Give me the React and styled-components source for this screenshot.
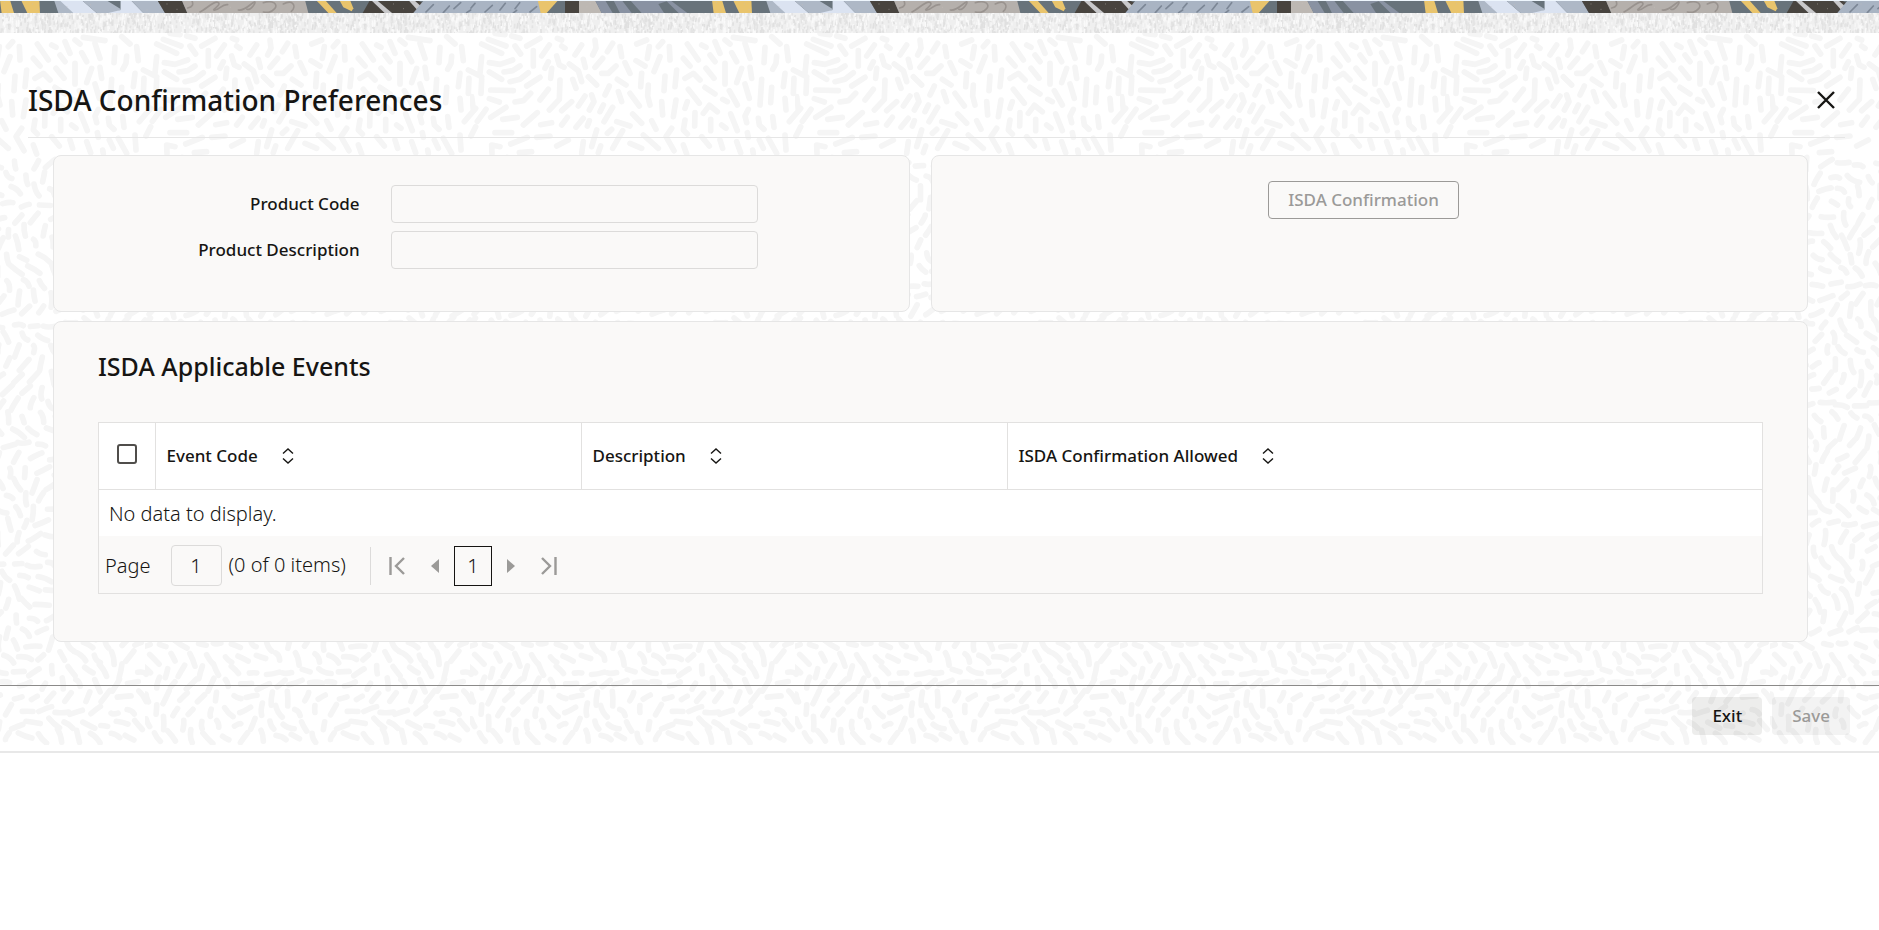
import React, { useState } from "react";
import styled, { createGlobalStyle } from "styled-components";

const svgUrl = (width, height, body) =>
  `url("data:image/svg+xml,${encodeURIComponent(
    `<svg xmlns="http://www.w3.org/2000/svg" width="${width}" height="${height}">${body}</svg>`
  )}")`;

const makeRandom = (seed) => () => {
  seed = (seed * 16807) % 2147483647;
  return seed / 2147483647;
};

// brush strokes of the page background, drawn at three times their size
const strokes = [
  "75,10 105,14", "125,18 150,25", "35,42 95,70", "55,28 108,48", "170,48 210,25",
  "135,48 152,72", "190,62 190,108", "215,78 238,45", "58,98 90,103 128,90",
  "102,126 128,122 150,108", "58,126 95,148", "120,155 150,148 175,128", "62,180 130,182",
  "35,80 30,130", "35,148 33,190", "58,206 88,216", "135,216 160,212 182,190",
  "62,262 108,232", "98,268 142,262", "22,274 48,238", "5,200 10,238", "160,285 202,248",
  "170,168 210,142", "210,210 235,178", "75,308 125,308", "122,342 172,322",
  "200,322 240,318", "212,284 245,278", "260,348 295,330", "66,370 65,345 90,350",
  "148,368 185,365", "275,48 285,55", "262,25 275,30", "315,75 335,45", "225,115 235,95",
  "245,115 242,145", "260,78 268,105 282,112", "340,88 346,112", "375,30 378,55 368,75",
  "298,102 325,122 335,155", "308,148 318,175", "375,112 398,85", "395,130 415,130 438,108",
  "412,65 428,40", "450,50 455,80", "355,140 380,165", "270,150 268,208 238,240",
  "325,228 345,198", "275,242 305,215", "365,195 372,215 358,240", "405,195 418,168",
  "390,245 400,225", "402,275 428,232", "442,148 468,165", "445,185 455,215",
  "480,190 508,228", "275,285 292,262", "318,292 340,265", "352,288 358,272",
  "440,275 480,288", "412,310 425,298", "365,350 380,300", "428,355 458,302",
  "335,370 340,335", "392,348 385,368", "480,340 515,355", "488,252 515,280",
  "520,315 565,355", "545,272 558,298", "535,165 533,198 540,225", "515,130 512,170",
  "500,42 530,30", "538,50 532,85", "565,50 578,35", "570,80 552,125", "598,50 600,90",
  "498,92 525,108", "465,98 480,130", "585,138 582,182", "620,120 615,170",
  "575,215 578,255", "618,210 610,260", "652,215 645,235", "675,248 674,288",
  "645,270 640,300 652,312", "605,295 588,320 612,362", "640,345 650,372",
  "652,42 685,90", "640,85 660,108", "695,45 708,52", "645,145 670,130 690,150",
  "720,75 735,95", "735,35 750,70", "765,30 780,42", "708,115 732,145", "765,100 765,162",
  "655,178 688,220", "705,172 735,192", "700,250 718,226 742,245", "722,268 722,302",
  "758,208 772,215", "755,285 768,295", "695,320 718,348", "750,330 758,355",
  "785,68 800,95", "815,115 800,158", "778,182 802,225", "782,252 802,302",
  "825,40 840,85", "790,22 855,32", "840,112 845,145", "825,162 838,205",
  "835,238 825,258 830,278", "832,308 835,322", "800,335 812,368", "848,360 850,370",
  "885,52 882,98", "920,78 918,100 908,118", "875,148 870,225", "905,172 902,218",
  "865,265 868,285 882,298", "908,260 912,292", "868,330 880,355", "895,325 920,370",
  "905,20 930,42", "950,50 955,92", "945,130 940,170", "945,205 948,240",
  "972,145 970,190", "992,235 958,275", "945,315 948,360", "978,318 992,290",
  "970,120 1010,140",
];

const TILE_WIDTH = 325;
const TILE_HEIGHT = 712;

const makeBrushTile = () => {
  const random = makeRandom(4217);
  const turn = (Math.PI * 2) / TILE_WIDTH;
  const lines = strokes.map((points) => `<polyline points="${points}"/>`);
  let row = 0;
  for (let y = 396; y < TILE_HEIGHT * 3; y += 40) {
    row += 1;
    for (let x = row % 2 ? 0 : 26; x < TILE_WIDTH * 3 - 20; x += 53) {
      const cx = x + random() * 14;
      const cy = y + random() * 14;
      const px = cx / 3;
      const py = cy / 3;
      const angle =
        1.5 * Math.sin(px * turn + py / 34) +
        1.1 * Math.cos(px * turn * 2 - py / 47) +
        (random() - 0.5) * 0.5;
      const half = 10 + random() * 12;
      const dx = Math.cos(angle) * half;
      const dy = Math.sin(angle) * half;
      const bend = (random() - 0.5) * 12;
      lines.push(
        `<path d="M${cx - dx} ${cy - dy}Q${cx + bend} ${cy - bend} ${cx + dx} ${cy + dy}"/>`
      );
    }
  }
  const group = lines.join("");
  return svgUrl(
    TILE_WIDTH,
    TILE_HEIGHT,
    `<g fill="none" stroke="#f5f5f5" stroke-width="17" stroke-linecap="round" stroke-linejoin="round" transform="translate(0 -3) scale(.33333)">${group}<g transform="translate(-975 0)">${group}</g></g>`
  );
};

const makeGrainTile = () => {
  const random = makeRandom(911);
  const shades = ["#e0e0e0", "#e4e4e4", "#fafafa", "#f6f6f6"];
  let body = `<rect width="356" height="20" fill="#efefef"/>`;
  for (let i = 0; i < 1000; i++) {
    const x = random() * 356;
    const y = random() * 22 - 3;
    const shade = shades[Math.floor(random() * shades.length)];
    body += `<path d="M${x.toFixed(1)} ${y.toFixed(1)}l${(random() * 2 - 1).toFixed(1)} ${(
      2 + random() * 4
    ).toFixed(1)}" stroke="${shade}" stroke-width="1.6"/>`;
  }
  return svgUrl(356, 20, body);
};

const ribbonShapes = [
  ["#68737b", "0,0 2136,0 2136,39 0,39"],
  ["#e9c46c", "0,0 30,0 42,39 5,39"],
  ["#e9c46c", "63,0 118,0 120,39 82,39"],
  ["#aeb8c6", "162,0 205,0 228,39 175,39"],
  ["#dbe3f1", "178,0 245,0 290,39 220,39"],
  ["#aeb8c6", "245,0 362,0 362,30 340,39 290,39"],
  ["#68737b", "318,0 362,0 362,27"],
  ["#dbe3f1", "362,0 392,0 430,39 325,39 362,30"],
  ["#aeb8c6", "392,0 472,0 495,39 430,39"],
  ["#48443f", "472,0 545,0 562,39 495,39"],
  ["#b5b0ac", "545,0 915,0 925,39 562,39"],
  ["#e9c46c", "948,0 975,0 1010,39 985,39"],
  ["#e9c46c", "1018,0 1050,0 1060,25 1055,34 1030,22"],
  ["#48443f", "1110,0 1250,0 1270,10 1245,39 1088,39"],
  ["#c8c8ca", "1113,0 1130,0 1176,39 1154,39"],
  ["#c8c8ca", "1225,0 1242,0 1262,18 1250,28"],
  ["#a9b4c3", "1272,0 1618,0 1624,39 1240,39"],
  ["#e9c46c", "1613,0 1675,0 1640,39 1622,39"],
  ["#48443f", "1695,0 1737,0 1737,39 1695,39"],
  ["#bdb8b3", "1737,0 1785,0 1805,39 1737,39"],
  ["#8992a2", "1785,0 2010,0 2062,39 1805,39"],
  ["#68737b", "1815,0 1840,0 1860,39 1838,39"],
  ["#68737b", "1865,0 1890,0 1925,39 1895,39"],
  ["#68737b", "1975,12 2000,4 2036,39 1992,39"],
];

const makeRibbonTile = () => {
  const shapes = ribbonShapes
    .map(([fill, points]) => `<polygon fill="${fill}" points="${points}"/>`)
    .join("");
  const squiggles =
    "M575 0q10 20-12 24M600 36c20-10 45-36 55-28s-25 24-10 22 20-18 38-16M715 30c20 4 40-22 48-24s-10 26-22 22M790 8c30-10 45 6 34 18s-20 12-34 10M850 12c30-16 40 8 24 22";
  const ticks =
    "M1278 36l22-22M1330 38l18-20M1362 26l20-18M1425 10l-12 14M1455 36l22-20M1500 30l16-20M1545 26l14-18M1590 36l20-16M1400 38l12-8M1540 39l10-8";
  const glint =
    "M12 8h2M96 12h2M110 28h2M24 30h2M200 20h2M270 14h2M440 30h2M690 22h2M500 12h2M530 28h2M1180 12h2M1210 26h2M1310 12h2M1490 8h2M1760 20h2M1770 10h2";
  return svgUrl(
    712,
    13,
    `<g transform="scale(.33333)">${shapes}<g fill="none" stroke-width="5" stroke-linecap="round"><path stroke="#99938f" d="${squiggles}"/><path stroke="#7c8796" d="${ticks}"/></g><path stroke="#c3beba" stroke-width="2" d="${glint}"/><rect width="2136" height="3" fill="#eef6fd"/></g>`
  );
};

const columns = [
  { id: "code", label: "Event Code" },
  { id: "description", label: "Description" },
  { id: "allowed", label: "ISDA Confirmation Allowed" },
];

const SortIcon = () => (
  <svg width="12" height="16" viewBox="0 0 12 16" aria-hidden="true">
    <path d="M1 5.5L6 1l5 4.5M1 10.5L6 15l5-4.5" fill="none" stroke="#161513" strokeWidth="1.4" />
  </svg>
);

const App = () => {
  const [page, setPage] = useState("1");

  return (
    <>
      <GlobalStyle />
      <Ribbon />
      <Grain />
      <Main>
        <TitleBar>
          <Title>ISDA Confirmation Preferences</Title>
          <CloseButton type="button" aria-label="Close">
            <svg width="18" height="18" viewBox="0 0 18 18">
              <path d="M1 1l16 16M17 1L1 17" stroke="#161513" strokeWidth="2.4" />
            </svg>
          </CloseButton>
        </TitleBar>

        <Content>
          <TopRow>
            <Panel>
              <Fields>
                <label htmlFor="productCode">Product Code</label>
                <TextInput id="productCode" readOnly />
                <label htmlFor="productDescription">Product Description</label>
                <TextInput id="productDescription" readOnly />
              </Fields>
            </Panel>
            <ActionPanel>
              <OutlineButton type="button" disabled>
                ISDA Confirmation
              </OutlineButton>
            </ActionPanel>
          </TopRow>

          <EventsPanel>
            <SectionTitle>ISDA Applicable Events</SectionTitle>
            <TableFrame>
              <Table>
                <colgroup>
                  <SelectCol />
                  <DataCol />
                  <DataCol />
                  <col />
                </colgroup>
                <thead>
                  <tr>
                    <SelectHead>
                      <Checkbox type="checkbox" aria-label="Select all rows" />
                    </SelectHead>
                    {columns.map((column) => (
                      <th key={column.id}>
                        <HeadCell>
                          {column.label}
                          <SortIcon />
                        </HeadCell>
                      </th>
                    ))}
                  </tr>
                </thead>
                <tbody>
                  <tr>
                    <td colSpan={4}>No data to display.</td>
                  </tr>
                </tbody>
              </Table>
              <Pager>
                <label htmlFor="page">Page</label>
                <PageInput id="page" value={page} onChange={(e) => setPage(e.target.value)} />
                <ItemCount>(0 of 0 items)</ItemCount>
                <PagerButton type="button" aria-label="First page" disabled>
                  <svg width="16" height="18" viewBox="0 0 16 18">
                    <path d="M1.5 0v18M15 1L7 9l8 8" fill="none" stroke="#9b9a98" strokeWidth="2.4" />
                  </svg>
                </PagerButton>
                <PagerButton type="button" aria-label="Previous page" disabled>
                  <svg width="8" height="14" viewBox="0 0 8 14">
                    <path d="M8 0v14L0 7z" fill="#9b9a98" />
                  </svg>
                </PagerButton>
                <CurrentPage type="button">1</CurrentPage>
                <PagerButton type="button" aria-label="Next page" disabled>
                  <svg width="8" height="14" viewBox="0 0 8 14">
                    <path d="M0 0v14l8-7z" fill="#9b9a98" />
                  </svg>
                </PagerButton>
                <PagerButton type="button" aria-label="Last page" disabled>
                  <svg width="16" height="18" viewBox="0 0 16 18">
                    <path d="M14.5 0v18M1 1l8 8-8 8" fill="none" stroke="#9b9a98" strokeWidth="2.4" />
                  </svg>
                </PagerButton>
              </Pager>
            </TableFrame>
          </EventsPanel>
        </Content>

        <Footer>
          <FooterButton type="button">Exit</FooterButton>
          <FooterButton type="button" disabled>
            Save
          </FooterButton>
        </Footer>
      </Main>
      <EndLine />
    </>
  );
};

const GlobalStyle = createGlobalStyle`
  * {
    box-sizing: border-box;
  }
  body {
    margin: 0;
    background: #fff;
    color: #161513;
    font-family: "Noto Sans", "Open Sans", sans-serif;
    font-size: 17px;
    line-height: 24px;
  }
  button, input {
    font: inherit;
    color: inherit;
  }
`;

const Ribbon = styled.div`
  height: 13px;
  background: ${makeRibbonTile()} repeat-x;
`;

const Grain = styled.div`
  height: 20px;
  background: ${makeGrainTile()} repeat-x;
`;

const Main = styled.main`
  background: ${makeBrushTile()} 145px 0;
`;

const TitleBar = styled.header`
  display: flex;
  align-items: center;
  justify-content: space-between;
  height: 105px;
  margin: 0 34px 0 28px;
  padding: 30px 2px 0 0;
  border-bottom: 1px solid #e6e6e6;
`;

const Title = styled.h1`
  margin: 0;
  font-size: 28px;
  line-height: 36px;
  font-weight: 500;
`;

const CloseButton = styled.button`
  display: flex;
  padding: 8px;
  border: 0;
  background: none;
`;

const Content = styled.div`
  padding: 17px 71px 43px 53px;
`;

const TopRow = styled.div`
  display: grid;
  grid-template-columns: 857fr 877fr;
  gap: 21px;
  margin-bottom: 9px;
`;

const Panel = styled.section`
  border: 1px solid #e6e6e6;
  border-radius: 8px;
  background: #faf9f8;
  min-height: 157px;
  padding: 29px 0;
`;

const ActionPanel = styled(Panel)`
  padding: 25px 12px 25px 0;
  text-align: center;
`;

const Fields = styled.div`
  display: grid;
  grid-template-columns: 306fr 368fr 120fr;
  column-gap: 31px;
  row-gap: 8px;
  align-items: center;
  font-weight: 500;

  label {
    grid-column: 1;
    text-align: right;
  }
`;

const TextInput = styled.input`
  width: 100%;
  height: 38px;
  padding: 0 12px;
  border: 1px solid #dcdbda;
  border-radius: 4px;
  background: transparent;
`;

const OutlineButton = styled.button`
  height: 38px;
  padding: 0 19px;
  border: 1px solid #9b9a98;
  border-radius: 4px;
  background: transparent;
  font-weight: 500;
  color: #9b9a98;
`;

const EventsPanel = styled(Panel)`
  padding: 26px 44px 47px;
`;

const SectionTitle = styled.h2`
  margin: 0 0 38px;
  font-size: 25px;
  line-height: 36px;
  font-weight: 500;
`;

const TableFrame = styled.div`
  border: 1px solid #e2e1e0;
`;

const Table = styled.table`
  width: 100%;
  table-layout: fixed;
  border-collapse: collapse;
  background: #fff;

  th {
    height: 66px;
    padding: 0 11px;
    border-bottom: 1px solid #e2e1e0;
    font-weight: 500;
    text-align: left;
  }
  th + th {
    border-left: 1px solid #e2e1e0;
  }
  td {
    height: 47px;
    padding: 3px 10px 0;
    font-size: 20px;
    font-weight: 300;
  }
`;

const SelectCol = styled.col`
  width: 56px;
`;

const DataCol = styled.col`
  width: 426px;
`;

const SelectHead = styled.th`
  && {
    text-align: center;
  }
`;

const HeadCell = styled.div`
  display: flex;
  align-items: center;
  gap: 24px;
`;

const Checkbox = styled.input`
  appearance: none;
  display: block;
  width: 20px;
  height: 20px;
  margin: 0 auto 3px;
  border: 2px solid #504e4b;
  border-radius: 3px;
`;

const Pager = styled.div`
  display: flex;
  align-items: center;
  height: 57px;
  padding: 2px 6px 0;
  font-size: 20px;
  font-weight: 300;
`;

const PageInput = styled.input`
  width: 51px;
  height: 41px;
  margin: 0 7px 0 20px;
  border: 1px solid #dcdbda;
  border-radius: 4px;
  background: transparent;
  text-align: center;
`;

const ItemCount = styled.span`
  height: 38px;
  padding-right: 24px;
  margin-right: 7px;
  border-right: 1px solid #dcdbda;
  line-height: 36px;
`;

const PagerButton = styled.button`
  display: flex;
  align-items: center;
  justify-content: center;
  width: 38px;
  height: 38px;
  padding: 0;
  border: 0;
  background: none;
`;

const CurrentPage = styled.button`
  width: 38px;
  height: 40px;
  padding: 0;
  border: 1px solid #161513;
  background: transparent;
`;

const Footer = styled.footer`
  display: flex;
  justify-content: flex-end;
  gap: 10px;
  padding: 11px 29px 10px;
  border-top: 1px solid #8b8a89;
`;

const FooterButton = styled.button`
  height: 38px;
  padding: 0 20px;
  border: 0;
  border-radius: 4px;
  background: ${(props) => (props.disabled ? "rgba(22, 21, 19, 0.05)" : "rgba(22, 21, 19, 0.08)")};
  font-weight: 500;
  color: ${(props) => (props.disabled ? "#9b9a98" : "#161513")};
`;

const EndLine = styled.div`
  height: 2px;
  margin-top: 6px;
  background: #e8e8e8;
`;

export default App;
